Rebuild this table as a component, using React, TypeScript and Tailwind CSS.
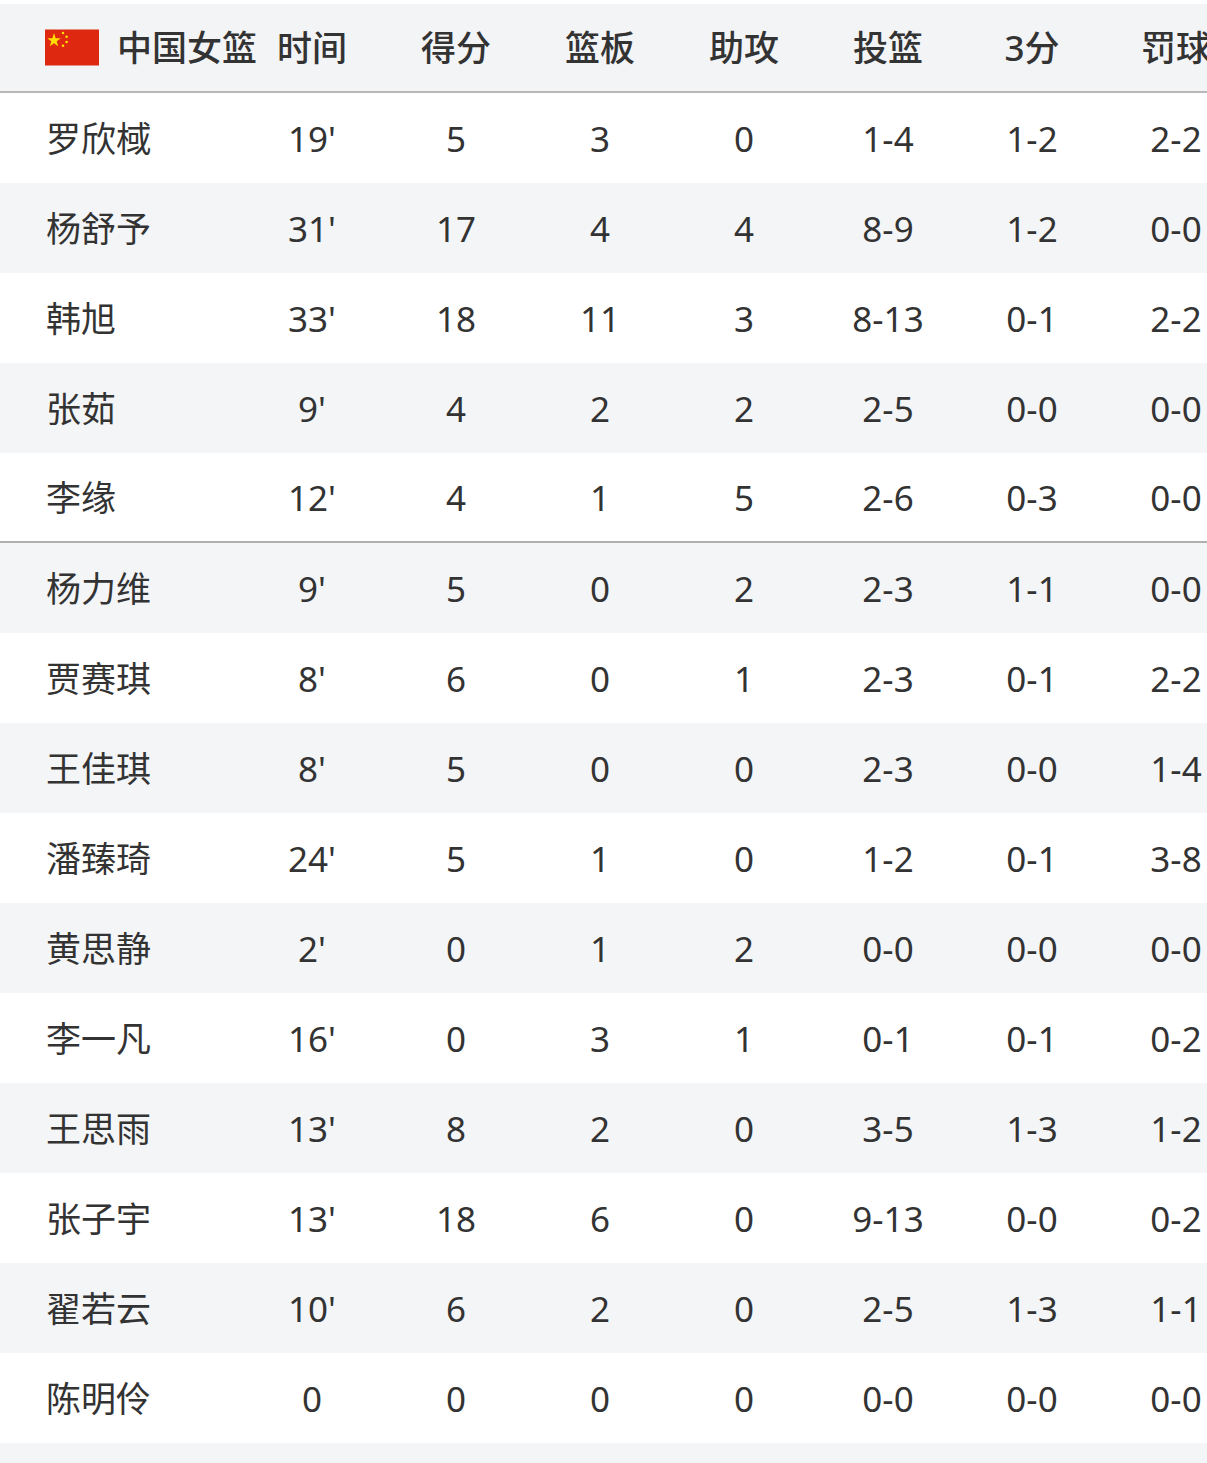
import React from 'react'

type Row = { name: string; min: string; pts: string; reb: string; ast: string; fg: string; tp: string; ft: string }

const starters: Row[] = [
  { name: '罗欣棫', min: "19'", pts: '5', reb: '3', ast: '0', fg: '1-4', tp: '1-2', ft: '2-2' },
  { name: '杨舒予', min: "31'", pts: '17', reb: '4', ast: '4', fg: '8-9', tp: '1-2', ft: '0-0' },
  { name: '韩旭', min: "33'", pts: '18', reb: '11', ast: '3', fg: '8-13', tp: '0-1', ft: '2-2' },
  { name: '张茹', min: "9'", pts: '4', reb: '2', ast: '2', fg: '2-5', tp: '0-0', ft: '0-0' },
  { name: '李缘', min: "12'", pts: '4', reb: '1', ast: '5', fg: '2-6', tp: '0-3', ft: '0-0' },
]

const bench: Row[] = [
  { name: '杨力维', min: "9'", pts: '5', reb: '0', ast: '2', fg: '2-3', tp: '1-1', ft: '0-0' },
  { name: '贾赛琪', min: "8'", pts: '6', reb: '0', ast: '1', fg: '2-3', tp: '0-1', ft: '2-2' },
  { name: '王佳琪', min: "8'", pts: '5', reb: '0', ast: '0', fg: '2-3', tp: '0-0', ft: '1-4' },
  { name: '潘臻琦', min: "24'", pts: '5', reb: '1', ast: '0', fg: '1-2', tp: '0-1', ft: '3-8' },
  { name: '黄思静', min: "2'", pts: '0', reb: '1', ast: '2', fg: '0-0', tp: '0-0', ft: '0-0' },
  { name: '李一凡', min: "16'", pts: '0', reb: '3', ast: '1', fg: '0-1', tp: '0-1', ft: '0-2' },
  { name: '王思雨', min: "13'", pts: '8', reb: '2', ast: '0', fg: '3-5', tp: '1-3', ft: '1-2' },
  { name: '张子宇', min: "13'", pts: '18', reb: '6', ast: '0', fg: '9-13', tp: '0-0', ft: '0-2' },
  { name: '翟若云', min: "10'", pts: '6', reb: '2', ast: '0', fg: '2-5', tp: '1-3', ft: '1-1' },
  { name: '陈明伶', min: '0', pts: '0', reb: '0', ast: '0', fg: '0-0', tp: '0-0', ft: '0-0' },
]

const headers = ['时间', '得分', '篮板', '助攻', '投篮', '3分', '罚球']

function Flag() {
  // five-star red flag
  return (
    <svg width="54" height="37" viewBox="0 0 30 20" className="shrink-0">
      <rect width="30" height="20" fill="#de2910" />
      <polygon
        fill="#ffde00"
        points="5,2 5.9,4.8 8.8,4.8 6.5,6.5 7.3,9.3 5,7.6 2.7,9.3 3.5,6.5 1.2,4.8 4.1,4.8"
      />
      <circle cx="10" cy="2" r="0.7" fill="#ffde00" />
      <circle cx="12" cy="4" r="0.7" fill="#ffde00" />
      <circle cx="12" cy="7" r="0.7" fill="#ffde00" />
      <circle cx="10" cy="9" r="0.7" fill="#ffde00" />
    </svg>
  )
}

function StatRow({ row, shaded, divider }: { row: Row; shaded: boolean; divider?: boolean }) {
  const cells = [row.min, row.pts, row.reb, row.ast, row.fg, row.tp, row.ft]
  return (
    <div
      className={`grid grid-cols-[240px_repeat(7,144px)] h-[90px] items-center ${shaded ? 'bg-[#f4f5f7]' : 'bg-white'} ${divider ? 'border-b-2 border-[#b0b0b0]' : ''}`}
    >
      <div className="pl-[46px] whitespace-nowrap">{row.name}</div>
      {cells.map((c, i) => (
        <div key={i} className="text-center whitespace-nowrap">{c}</div>
      ))}
    </div>
  )
}

export default function App() {
  return (
    <div
      className="w-[1207px] h-[1463px] overflow-hidden bg-white text-[#333] text-[35px] leading-none"
      style={{ fontFamily: '"Noto Sans", "Noto Sans CJK SC", sans-serif' }}
    >
      <div className="w-[1248px] pt-[4px]">
        {/* header */}
        <div className="grid grid-cols-[240px_repeat(7,144px)] h-[89px] items-center bg-[#f3f4f6] border-b-2 border-[#b8b8b8] font-medium">
          <div className="flex items-center pl-[45px] gap-[18px] whitespace-nowrap">
            <Flag />
            <span>中国女篮</span>
          </div>
          {headers.map((h) => (
            <div key={h} className="text-center whitespace-nowrap">{h}</div>
          ))}
        </div>

        {starters.map((r, i) => (
          <StatRow key={r.name} row={r} shaded={i % 2 === 1} divider={i === starters.length - 1} />
        ))}
        {bench.map((r, i) => (
          <StatRow key={r.name} row={r} shaded={i % 2 === 0} />
        ))}
        <div className="h-[40px] bg-[#f4f5f7]" />
      </div>
    </div>
  )
}
